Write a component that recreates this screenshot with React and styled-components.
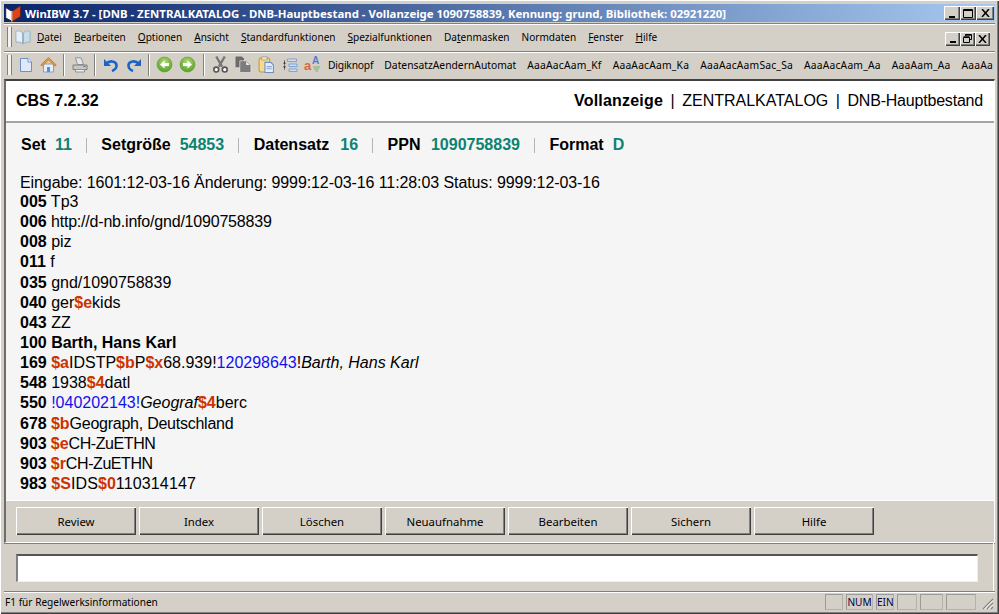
import React from "react";
import styled, { createGlobalStyle } from "styled-components";

const Global = createGlobalStyle`
  html, body { margin: 0; padding: 0; background: #d4d0c8; overflow: hidden; }
  * { box-sizing: border-box; }
`;

const uiFont = `"Noto Sans", "Liberation Sans", sans-serif`;
const docFont = `"Liberation Sans", Arial, sans-serif`;

const Win = styled.div`
  width: 999px; height: 614px; background: #d4d0c8;
  display: flex; flex-direction: column; padding: 4px 4px 2px 4px;
  box-shadow: inset 1px 1px 0 #fff, inset -1px -1px 0 #404040, inset -2px -2px 0 #808080;
  font-family: ${uiFont}; color: #000;
`;
const TitleBar = styled.div`
  height: 18px; flex: none; display: flex; align-items: center; padding: 0 1px 0 1px;
  background: linear-gradient(90deg, #0a246a 0%, #a6caf0 100%);
  color: #fff; font: bold 11.4px "Noto Sans", sans-serif; white-space: nowrap;
`;
const TitleText = styled.span` margin-left: 4px; flex: 1; `;
const WinButtons = styled.div` display: flex; gap: ${p => p.$gap || 0}px; margin-right: ${p => p.$mr || 0}px; margin-top: ${p => p.$mt || 0}px; `;
const WinBtn = styled.button`
  width: ${p => p.$w || 16}px; height: 14px; padding: 0; border: 0; background: #d4d0c8;
  box-shadow: inset 1px 1px 0 #fff, inset -1px -1px 0 #404040, inset -2px -2px 0 #808080;
  display: flex; align-items: center; justify-content: center;
`;
const Band = styled.div`
  flex: none; display: flex; align-items: center; height: ${p => p.$h}px; position: relative;
  border-top: 1px solid #fff; box-shadow: 0 -1px 0 #808080; padding-bottom: ${p => p.$pb || 0}px;
  margin-top: ${p => p.$mt || 0}px; white-space: nowrap; overflow: hidden;
`;
const Gripper = styled.div`
  width: 5px; height: 20px; flex: none; margin-left: 3px;
  border-left: 1px solid #808080; border-right: 1px solid #808080; background: #f4f2ee;
`;
const BookSlot = styled.div` margin-left: 3px; display: flex; `;
const MenuList = styled.div` display: flex; gap: 12px; margin-left: 6px; flex: 1; `;
const MenuItem = styled.span` font-size: 10.05px; line-height: 14px; & u { text-underline-offset: 1px; } `;
const ToolSlot = styled.div`
  width: 23px; flex: none; height: 22px; display: flex; align-items: center; justify-content: center;
  margin-left: ${p => p.$ml || 0}px;
`;
const ToolSep = styled.div`
  width: 2px; height: 22px; flex: none; margin: 0 ${p => p.$m || 3}px;
  border-left: 1px solid #808080; border-right: 1px solid #fff;
`;
const TextTools = styled.div` display: flex; gap: 11px; margin-left: 4px; `;
const TextTool = styled.span` font-size: 10.3px; line-height: 14px; letter-spacing: ${p => p.$ls || 0}px; `;

const DocPanel = styled.div`
  flex: none; height: 464px; display: flex; flex-direction: column;
  border-top: 2px solid #404040; border-left: 2px solid #6e6c68; border-right: 1px solid #fff; border-bottom: 1px solid #fff;
  box-shadow: 0 1px 0 #808080;
`;
const DocHeader = styled.header`
  height: 42px; flex: none; background: #fff; border-bottom: 2px solid #a5a5a0;
  display: flex; align-items: center; justify-content: space-between; padding: 0 11px 1px 10px;
  font: 16px/20px ${docFont};
`;
const Strong = styled.b` font-weight: bold; letter-spacing: ${p => p.$ls || 0}px; `;
const Crumbs = styled.div` display: flex; gap: 7.5px; `;
const CrumbText = styled.span` letter-spacing: ${p => p.$ls || 0}px; `;
const Body = styled.main`
  flex: 1; background: #f5f5f5; padding: 12px 14px 0 14px; font: 16px/20px ${docFont};
  border-bottom: 1px solid #fff; overflow: hidden;
`;
const InfoBar = styled.div` display: flex; align-items: center; height: 20px; margin: 0 0 18px 1px; `;
const InfoLabel = styled.b` margin-right: ${p => p.$gap}px; `;
const InfoValue = styled.b` color: #0b8272; `;
const InfoSep = styled.span` width: 1px; height: 15px; background: #b5b5b0; margin: 0 14.5px 0 14px; `;
const Line = styled.div`
  height: ${p => p.$h || 20.15}px; line-height: 20px; white-space: nowrap; letter-spacing: ${p => p.$ls || 0}px;
`;
const Tag = styled.b` letter-spacing: 0; `;
const Sub = styled.b` color: #cc3300; letter-spacing: 0; `;
const Link = styled.span` color: #1111ee; `;
const Ital = styled.i``;

const ButtonBar = styled.div`
  height: 41px; flex: none; display: flex; gap: 3px; padding: 6px 0 0 10px; background: #d4d0c8;
`;
const Btn = styled.button`
  width: 120px; height: 28px; padding: 0; border: 0; background: #d4d0c8; color: #000;
  font: 11.4px ${uiFont};
  box-shadow: inset 1px 1px 0 #fff, inset -1px -1px 0 #404040, inset -2px -2px 0 #808080;
`;
const InputArea = styled.div`
  flex: none; height: 48px; padding: 11px 15px 9px 12px;
  border-right: 1px solid #fff; margin-right: 1px;
`;
const CmdInput = styled.div`
  height: 28px; background: #fff; border-top: 2px solid #555; border-left: 2px solid #808080;
  border-right: 1px solid #eee; border-bottom: 1px solid #eee;
`;
const StatusBar = styled.footer`
  flex: none; height: 22px; display: flex; align-items: center; border-top: 1px solid #808080;
  box-shadow: inset 0 1px 0 #fff; font-size: 10.1px; padding: 1px 0 3px 1px;
`;
const StatusText = styled.span` flex: 1; `;
const Pane = styled.div`
  width: ${p => p.$w}px; height: 16px; margin-right: 3px; text-align: center; line-height: 14px; overflow: hidden;
  border: 1px solid #9c9a96; border-right-color: #b4b2ac; border-bottom-color: #b4b2ac; color: #000044;
`;
const Grip = styled.svg` width: 13px; height: 13px; flex: none; margin: 4px 1px 0 2px; `;

const LogoIcon = () => (
  <svg width="16" height="17" viewBox="0 0 16 17" style={{ flex: "none" }}>
    <path d="M.7 2.500 6.500 6v10L.7 13z" fill="#fff" stroke="#20283c" />
    <path d="M7 6.500 15.300 1v10.500L7 16.500z" fill="#dc4418" stroke="#7a2008" strokeWidth=".6" />
    <path d="M6.800 6v10.500" stroke="#fff" />
  </svg>
);
const BookIcon = () => (
  <svg width="16" height="16" viewBox="0 0 16 16" style={{ flex: "none" }}>
    <path d="M.8 2.500c2.500-1 5-1 6.700 1.500v11C6 13 3.500 12.500 1 13.500z" fill="#e6eff6" stroke="#9ab2c4" />
    <path d="M8.500 4C10 1.500 13 1.500 15.200 2.500l-.2 11c-2-1-4.500-.5-6.500 1.500z" fill="#c8dcea" stroke="#9ab2c4" />
  </svg>
);
const DocIcon = () => (
  <svg width="16" height="16" viewBox="0 0 16 16">
    <path d="M2.500 1.500h7.500l3.500 3.500v9.500h-11z" fill="#dfe9fa" stroke="#6d8fc9" />
    <path d="M10 1.500v3.500h3.500" fill="#fff" stroke="#6d8fc9" />
  </svg>
);
const HomeIcon = () => (
  <svg width="17" height="17" viewBox="0 0 17 17">
    <path d="M3.500 8v8h10V8z" fill="#e6eef8" stroke="#7fa0c8" />
    <path d="M7 11h3v5H7z" fill="#5b8fd0" />
    <path d="M.8 9 8.500 1.500 16.200 9l-1.500 1-6.200-6-6.200 6z" fill="#ee9a38" stroke="#c06a18" strokeWidth=".7" />
  </svg>
);
const PrintIcon = () => (
  <svg width="16" height="16" viewBox="0 0 16 16">
    <path d="M3.500.8h5.500l2.500 6.700H5.500z" fill="#e4e8ec" stroke="#909496" />
    <path d="M1 8h14v4.500H1z" fill="#c6c8c8" stroke="#7c7e7e" />
    <path d="M3.500 12.500h9V15h-9z" fill="#efefef" stroke="#8e8e8e" />
    <path d="M11.500 9.500h2" stroke="#666" />
  </svg>
);
const UndoIcon = ({ flip }) => (
  <svg width="16" height="16" viewBox="0 0 16 16" style={flip ? { transform: "scaleX(-1)" } : undefined}>
    <path d="M3.500 6.500C6 3.500 13 3.500 13.500 8c.3 3-2 5-4.500 6" fill="none" stroke="#1c63c8" strokeWidth="2.600" />
    <path d="M1 2v7h7z" fill="#1c63c8" />
  </svg>
);
const ArrowIcon = ({ flip }) => (
  <svg width="17" height="17" viewBox="0 0 17 17" style={flip ? { transform: "scaleX(-1)" } : undefined}>
    <defs>
      <radialGradient id={flip ? "gf" : "gb"} cx=".5" cy=".35" r=".7">
        <stop offset="0" stopColor="#b8dc7a" /><stop offset="1" stopColor="#4c9a1e" />
      </radialGradient>
    </defs>
    <circle cx="8.500" cy="8.500" r="7.500" fill={`url(#${flip ? "gf" : "gb"})`} stroke="#5c9c30" strokeWidth=".6" />
    <path d="M4 8.500 8.500 4.500v2.500h4.500v3H8.500v2.500z" fill="#fff" />
  </svg>
);
const CutIcon = () => (
  <svg width="17" height="17" viewBox="0 0 16 16">
    <path d="M4 .5 9.500 10M12 .5 6.500 10" stroke="#777" strokeWidth="2.200" fill="none" />
    <circle cx="4" cy="12.800" r="2.300" fill="#fff" stroke="#555" strokeWidth="1.500" />
    <circle cx="12" cy="12.800" r="2.300" fill="#fff" stroke="#555" strokeWidth="1.500" />
  </svg>
);
const CopyIcon = () => (
  <svg width="17" height="17" viewBox="0 0 16 16">
    <path d="M.5.500h6l2 2v8h-8z" fill="#6a6a6a" />
    <path d="M4.500 4.500h6.500l4 4V15.500H4.500z" fill="#7c7c7c" stroke="#f2f0ec" strokeWidth=".6" />
    <path d="M10.500 5v3.500h3.500" fill="#eee" />
  </svg>
);
const PasteIcon = () => (
  <svg width="17" height="17" viewBox="0 0 16 16">
    <rect x="1" y="2" width="10" height="13" rx="1.500" fill="#f6dc8a" stroke="#c49a38" />
    <rect x="3.500" y=".8" width="5" height="3" fill="#e8e4d8" stroke="#9a9a8a" strokeWidth=".7" />
    <path d="M6.500 6h5.500l2.500 2.500V15.500h-8z" fill="#e6eefa" stroke="#6d8fc9" />
    <path d="M8 10h5M8 12h5" stroke="#8aa6d4" />
  </svg>
);
const TreeIcon = () => (
  <svg width="16" height="16" viewBox="0 0 16 16">
    <path d="M5.500 2h9v2.500h-9zM7 7h8v2.500H7zM7 12h8v2.500H7z" fill="#cfe0f6" stroke="#6d95cf" strokeWidth=".8" />
    <path d="M2.500 3.500v9.500" stroke="#222" strokeDasharray="1 1" />
    <path d="M1 6.500h3L2.500 5zM1 9.500h3L2.500 11z" fill="#111" />
  </svg>
);
const SortIcon = () => (
  <svg width="18" height="17" viewBox="0 0 18 17">
    <text x="0" y="14" fontSize="13" fontWeight="bold" fontFamily="Liberation Sans" fill="#d8683a">a</text>
    <text x="8" y="8" fontSize="10" fontWeight="bold" fontFamily="Liberation Sans" fill="#5878c8">A</text>
    <path d="M9 11h7M10 13h5M11.500 15h2.500" stroke="#7cb05c" />
  </svg>
);
const Min = () => <svg width="8" height="9" viewBox="0 0 8 9"><path d="M1 7h6v2H1z" fill="#000" /></svg>;
const Max = () => <svg width="10" height="9" viewBox="0 0 10 9"><path d="M.5.500h9v8h-9zM.5 1.500h9" fill="none" stroke="#000" /></svg>;
const Restore = () => <svg width="9" height="9" viewBox="0 0 9 9"><path d="M2.500 2V.5h6v5H7M.5 3.500h6v5h-6zM.5 2.800h6M2.500 1.200h6" fill="none" stroke="#000" /></svg>;
const Close = () => <svg width="9" height="8" viewBox="0 0 9 8"><path d="M1 0l7 8M8 0 1 8" fill="none" stroke="#000" strokeWidth="1.500" /></svg>;

const menus = [
  [<u key="u">D</u>, "atei"], [<u key="u">B</u>, "earbeiten"], [<u key="u">O</u>, "ptionen"], [<u key="u">A</u>, "nsicht"],
  [<u key="u">S</u>, "tandardfunktionen"], [<u key="u">S</u>, "pezialfunktionen"], ["Da", <u key="u">t</u>, "enmasken"],
  ["Normdaten"], [<u key="u">F</u>, "enster"], [<u key="u">H</u>, "ilfe"],
];
const tools = [["Digiknopf", -0.2], ["DatensatzAendernAutomat", 0], ["AaaAacAam_Kf", 0.2], ["AaaAacAam_Ka", 0.2], ["AaaAacAamSac_Sa", 0.2], ["AaaAacAam_Aa", 0.2], ["AaaAam_Aa", 0.2], ["AaaAa", 0.2]];
const info = [["Set", "11", 9], ["Setgröße", "54853", 9], ["Datensatz", "16", 11], ["PPN", "1090758839", 10.5], ["Format", "D", 9]];
const buttons = ["Review", "Index", "Löschen", "Neuaufnahme", "Bearbeiten", "Sichern", "Hilfe"];

export default function App() {
  return (
    <Win>
      <Global />
      <TitleBar>
        <LogoIcon />
        <TitleText>WinIBW 3.7 - [DNB - ZENTRALKATALOG - DNB-Hauptbestand - Vollanzeige 1090758839, Kennung: grund, Bibliothek: 02921220]</TitleText>
        <WinButtons>
          <WinBtn><Min /></WinBtn>
          <WinBtn><Max /></WinBtn>
          <WinBtn $w={18}><Close /></WinBtn>
        </WinButtons>
      </TitleBar>
      <Band $h={27} $mt={2} $pb={2}>
        <Gripper />
        <BookSlot><BookIcon /></BookSlot>
        <MenuList>
          {menus.map((m, i) => <MenuItem key={i}>{m}</MenuItem>)}
        </MenuList>
        <WinButtons $mr={5} $mt={3}>
          <WinBtn $w={15}><Min /></WinBtn>
          <WinBtn $w={15}><Restore /></WinBtn>
          <WinBtn $w={15}><Close /></WinBtn>
        </WinButtons>
      </Band>
      <Band $h={27} $mt={1} $pb={3}>
        <Gripper />
        <ToolSlot $ml={2}><DocIcon /></ToolSlot>
        <ToolSlot><HomeIcon /></ToolSlot>
        <ToolSep />
        <ToolSlot><PrintIcon /></ToolSlot>
        <ToolSep />
        <ToolSlot><UndoIcon /></ToolSlot>
        <ToolSlot><UndoIcon flip /></ToolSlot>
        <ToolSep />
        <ToolSlot><ArrowIcon /></ToolSlot>
        <ToolSlot><ArrowIcon flip /></ToolSlot>
        <ToolSep $m={4} />
        <ToolSlot><CutIcon /></ToolSlot>
        <ToolSlot><CopyIcon /></ToolSlot>
        <ToolSlot><PasteIcon /></ToolSlot>
        <ToolSlot><TreeIcon /></ToolSlot>
        <ToolSlot><SortIcon /></ToolSlot>
        <TextTools>
          {tools.map(([t, ls]) => <TextTool key={t} $ls={ls}>{t}</TextTool>)}
        </TextTools>
      </Band>
      <DocPanel>
        <DocHeader>
          <Strong>CBS 7.2.32</Strong>
          <Crumbs>
            <Strong $ls={0.2}>Vollanzeige</Strong><span>|</span><CrumbText>ZENTRALKATALOG</CrumbText><span>|</span><CrumbText $ls={-0.2}>DNB-Hauptbestand</CrumbText>
          </Crumbs>
        </DocHeader>
        <Body>
          <InfoBar>
            {info.map(([l, v, g], i) => (
              <React.Fragment key={l}>
                {i > 0 && <InfoSep />}
                <InfoLabel $gap={g}>{l}</InfoLabel><InfoValue>{v}</InfoValue>
              </React.Fragment>
            ))}
          </InfoBar>
          <Line $h={19} $ls={-0.09}>Eingabe: 1601:12-03-16 Änderung: 9999:12-03-16 11:28:03 Status: 9999:12-03-16</Line>
          <Line><Tag>005</Tag> Tp3</Line>
          <Line $ls={-0.2}><Tag>006</Tag> http://d-nb.info/gnd/1090758839</Line>
          <Line><Tag>008</Tag> piz</Line>
          <Line><Tag>011</Tag> f</Line>
          <Line><Tag>035</Tag> gnd/1090758839</Line>
          <Line><Tag>040</Tag> ger<Sub>$e</Sub>kids</Line>
          <Line><Tag>043</Tag> ZZ</Line>
          <Line><Tag>100 Barth, Hans Karl</Tag></Line>
          <Line><Tag>169</Tag> <Sub>$a</Sub>IDSTP<Sub>$b</Sub>P<Sub>$x</Sub>68.939!<Link>120298643</Link>!<Ital>Barth, Hans Karl</Ital></Line>
          <Line><Tag>548</Tag> 1938<Sub>$4</Sub>datl</Line>
          <Line><Tag>550</Tag> <Link>!040202143!</Link><Ital>Geograf</Ital><Sub>$4</Sub>berc</Line>
          <Line $ls={-0.25}><Tag>678</Tag> <Sub>$b</Sub>Geograph, Deutschland</Line>
          <Line $ls={-0.42}><Tag>903</Tag> <Sub>$e</Sub>CH-ZuETHN</Line>
          <Line $ls={-0.42}><Tag>903</Tag> <Sub>$r</Sub>CH-ZuETHN</Line>
          <Line $ls={0.15}><Tag>983</Tag> <Sub>$S</Sub>IDS<Sub>$0</Sub>110314147</Line>
        </Body>
        <ButtonBar>
          {buttons.map(b => <Btn key={b}>{b}</Btn>)}
        </ButtonBar>
      </DocPanel>
      <InputArea><CmdInput /></InputArea>
      <StatusBar>
        <StatusText>F1 für Regelwerksinformationen</StatusText>
        <Pane $w={18} />
        <Pane $w={27}>NUM</Pane>
        <Pane $w={18}>EIN</Pane>
        <Pane $w={20} />
        <Pane $w={23} />
        <Pane $w={30} />
        <Grip viewBox="0 0 13 13">
          <path d="M12 2 2 12M12 6 6 12M12 10l-2 2" stroke="#808080" strokeWidth="1.200" />
          <path d="M12 3.500 3.500 12M12 7.500 7.500 12" stroke="#fff" />
        </Grip>
      </StatusBar>
    </Win>
  );
}
